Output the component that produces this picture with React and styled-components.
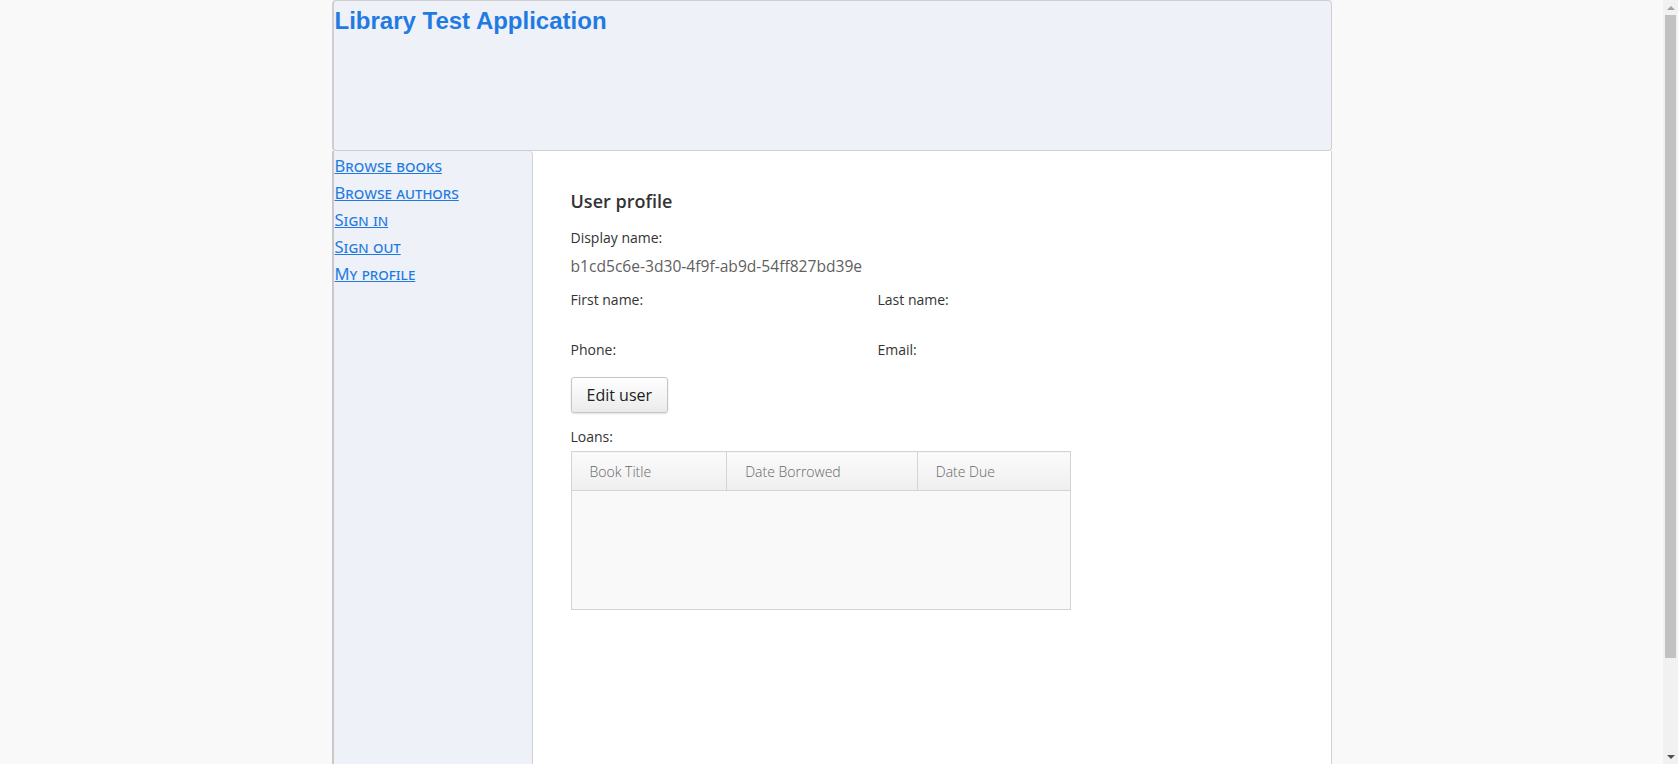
import styled, { createGlobalStyle } from "styled-components";

const GlobalStyle = createGlobalStyle`
  html, body {
    margin: 0;
    padding: 0;
    background: #f9f9f9;
  }
  body {
    padding-right: 15px;
    font-family: "Open Sans", "Noto Sans", sans-serif;
    color: #333;
  }
`;

//#region Layout

const Page = styled.div`
  width: 1000px;
  margin: 0 auto;
`;

const Header = styled.header`
  box-sizing: border-box;
  height: 151px;
  background: #eef1f8;
  border: 1px solid #cfcfcf;
  border-left-width: 2px;
  border-radius: 4px;
`;

const AppTitle = styled.h1`
  margin: 6px 0 0 1px;
  font-family: "Liberation Sans", Arial, sans-serif;
  font-size: 24px;
  font-weight: bold;
  color: #1f7be2;
`;

const Body = styled.div`
  display: flex;
  height: 721px;
`;

const Nav = styled.nav`
  box-sizing: border-box;
  width: 201px;
  flex-shrink: 0;
  background: #eef1f8;
  border-right: 1px solid #d2d2d2;
  border-left: 2px solid #c8c8c8;
  border-top-right-radius: 4px;
  padding: 2px 0 0 1px;
  display: flex;
  flex-direction: column;
  align-items: flex-start;
`;

const NavLink = styled.a`
  font-family: "Noto Sans", "Open Sans", sans-serif;
  font-variant: small-caps;
  font-size: 16.6px;
  line-height: 25px;
  margin-bottom: 2px;
  color: #1f7be2;
  text-decoration: underline;
  cursor: pointer;
`;

const Content = styled.main`
  flex: 1;
  background: #fff;
  border-right: 1px solid #d2d2d2;
  padding: 38px 37px 38px 38px;
`;

const ScrollTrack = styled.div`
  position: fixed;
  top: 0;
  right: 0;
  width: 15px;
  height: 100vh;
  background: #f1f1f1;
  display: flex;
  flex-direction: column;
  align-items: center;
`;

const ScrollArrow = styled.div`
  width: 15px;
  height: 15px;
  display: flex;
  align-items: center;
  justify-content: center;
  &::after {
    content: "";
    border-left: 4px solid transparent;
    border-right: 4px solid transparent;
    ${(p) =>
      p.$down
        ? "border-top: 4px solid #505050;"
        : "border-bottom: 4px solid #a3a3a3;"}
  }
`;

const ScrollThumb = styled.div`
  width: 11px;
  height: 643px;
  background: #c1c1c1;
`;

const ScrollGap = styled.div`
  flex: 1;
`;
//#endregion

//#region Profile

const Title = styled.h2`
  margin: 0 0 15px;
  font-size: 18px;
  line-height: 24px;
  font-weight: 600;
  color: #333;
`;

const Label = styled.div`
  font-size: 14px;
  line-height: 20px;
  color: #333;
`;

const Value = styled.div`
  font-size: 15.6px;
  line-height: 22px;
  color: #5f5f5f;
  margin: 7px 0 13px;
`;

const FieldGrid = styled.div`
  display: grid;
  grid-template-columns: 307px 307px;
  grid-auto-rows: 20px;
  row-gap: 30px;
  width: 614px;
`;

const Button = styled.button`
  box-sizing: border-box;
  height: 36px;
  margin-top: 17px;
  padding: 0 15px;
  font-family: "Open Sans", sans-serif;
  font-size: 16px;
  color: #222;
  background: linear-gradient(#ffffff, #ebebeb);
  border: 1px solid #c4c4c4;
  border-radius: 3px;
  box-shadow: 0 1px 2px rgba(0, 0, 0, 0.12);
`;

const LoansLabel = styled(Label)`
  margin: 14px 0 4px;
`;

const Table = styled.table`
  width: 500px;
  border-collapse: collapse;
  border: 1px solid #d4d4d4;
  background: #f9f9f9;
`;

const Th = styled.th`
  box-sizing: border-box;
  width: ${(p) => p.$w}px;
  height: 39px;
  padding: 0 18px;
  text-align: left;
  font-size: 14px;
  font-weight: 300;
  color: #666;
  background: linear-gradient(#fbfbfb, #efefef);
  border: 1px solid #d4d4d4;
`;

const EmptyCell = styled.td`
  height: 118px;
  padding: 0;
`;
//#endregion

const fields = ["First name:", "Last name:", "Phone:", "Email:"];

const columns = [
  { title: "Book Title", w: 156 },
  { title: "Date Borrowed", w: 191 },
  { title: "Date Due", w: 153 },
];

export default function App() {
  return (
    <>
      <GlobalStyle />
      <Page>
        <Header>
          <AppTitle>Library Test Application</AppTitle>
        </Header>
        <Body>
          <Nav>
            <NavLink href="#">Browse books</NavLink>
            <NavLink href="#">Browse authors</NavLink>
            <NavLink href="#">Sign in</NavLink>
            <NavLink href="#">Sign out</NavLink>
            <NavLink href="#">My profile</NavLink>
          </Nav>
          <Content>
            <Title>User profile</Title>
            <Label>Display name:</Label>
            <Value>b1cd5c6e-3d30-4f9f-ab9d-54ff827bd39e</Value>
            <FieldGrid>
              {fields.map((f) => (
                <Label key={f}>{f}</Label>
              ))}
            </FieldGrid>
            <Button>Edit user</Button>
            <LoansLabel>Loans:</LoansLabel>
            <Table>
              <thead>
                <tr>
                  {columns.map((c) => (
                    <Th key={c.title} $w={c.w}>
                      {c.title}
                    </Th>
                  ))}
                </tr>
              </thead>
              <tbody>
                <tr>
                  <EmptyCell colSpan={3} />
                </tr>
              </tbody>
            </Table>
          </Content>
        </Body>
      </Page>
      <ScrollTrack>
        <ScrollArrow />
        <ScrollThumb />
        <ScrollGap />
        <ScrollArrow $down />
      </ScrollTrack>
    </>
  );
}
